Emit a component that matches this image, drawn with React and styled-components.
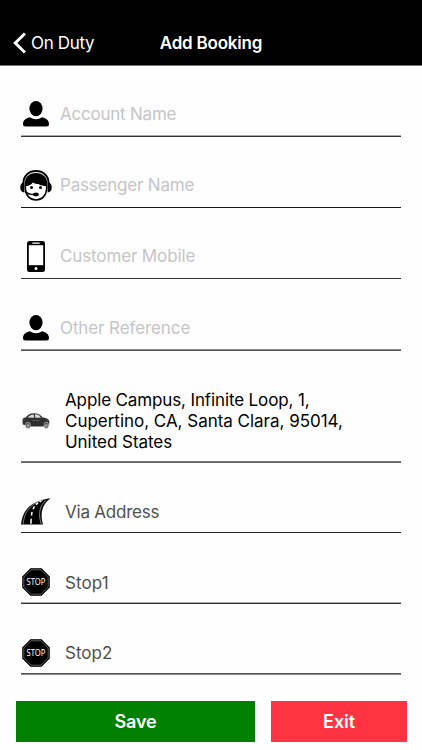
import React from 'react';
import styled, { createGlobalStyle } from 'styled-components';

const GlobalStyle = createGlobalStyle`
  * { box-sizing: border-box; }
  html, body { margin: 0; background: #fff; }
  body { font-family: Inter, "Liberation Sans", sans-serif; }
`;

const Screen = styled.div`
  width: 422px;
  height: 750px;
  display: flex;
  flex-direction: column;
  background: #fefefe;
  overflow: hidden;
`;

const NavBar = styled.header`
  height: 66px;
  flex: none;
  padding: 20px 13px 0;
  display: grid;
  grid-template-columns: 1fr auto 1fr;
  align-items: center;
  background: #000;
  border-bottom: 1px solid #777;
  color: #fff;
`;

const BackButton = styled.button`
  display: flex;
  align-items: center;
  gap: 5px;
  padding: 0;
  border: 0;
  background: none;
  color: inherit;
  font: 400 17px/22px Inter, sans-serif;
  letter-spacing: -0.35px;
`;

const Title = styled.h1`
  margin: 0;
  font-size: 17px;
  line-height: 22px;
  font-weight: 600;
  letter-spacing: -0.2px;
`;

const Form = styled.main`
  padding: 0 21px;
  display: flex;
  flex-direction: column;
`;

const Row = styled.div`
  height: ${(p) => p.$height}px;
  display: flex;
  align-items: flex-end;
  border-bottom: 1px solid ${(p) => p.$lower};
  box-shadow: inset 0 -1px 0 ${(p) => p.$upper};
`;

const IconSlot = styled.span`
  width: 30px;
  height: 32px;
  flex: none;
  margin-bottom: ${(p) => p.$lift}px;
  display: flex;
  align-items: center;
  justify-content: center;
  svg { display: block; flex: none; overflow: visible; }
`;

const Label = styled.div`
  margin: 0 0 ${(p) => p.$lift}px ${(p) => p.$gap}px;
  font-size: 17px;
  line-height: 21px;
  letter-spacing: ${(p) => p.$spacing}px;
  color: ${(p) => p.$color};
  white-space: nowrap;
`;

const Line = styled.span`
  display: block;
  letter-spacing: ${(p) => p.$spacing}px;
`;

const Actions = styled.footer`
  display: grid;
  grid-template-columns: 239px 136px;
  gap: 16px;
  padding: 26px 0 0 16px;
`;

const Action = styled.button`
  height: 41px;
  border: 0;
  padding: 0;
  color: #fff;
  background: ${(p) => p.$bg};
  font: 600 18px/22px Inter, sans-serif;
  letter-spacing: -0.1px;
`;

const PersonIcon = () => (
  <svg width="26" height="26" viewBox="0 0 26 26">
    <ellipse cx="13" cy="7.600" rx="6.600" ry="7.600" />
    <path d="M6.800 16.200Q13 20.200 19.200 16.200C23.500 17.200 26 19.500 26 23Q26 25.500 23.400 25.500H2.600Q0 25.500 0 23C0 19.500 2.500 17.200 6.800 16.200Z" />
  </svg>
);

const AgentIcon = () => (
  <svg width="32" height="31" viewBox="0 0 32 31">
    <path d="M3.400 13C3.600 5.500 8.800 1 16 1s12.400 4.500 12.600 12" fill="none" stroke="#000" strokeWidth="1.900" />
    <path d="M4.600 14C4.600 7.400 9.300 3 16 3S27.400 7.400 27.400 14L27 20H5Z" />
    <path d="M4.400 12.600V22.400Q.3 22 .3 17.400T4.400 12.600ZM27.600 12.600V22.400Q31.700 22 31.700 17.400T27.600 12.600Z" />
    <path d="M5.400 15.600Q11.200 14.700 12.800 11.200Q14 13.300 16.800 13.300Q16.100 12.600 16.600 11.600Q19.500 15 26.600 15.600V18.800C26.400 25.500 22 29.900 16 29.900S5.600 25.500 5.400 18.800Z" fill="#fff" stroke="#000" strokeWidth="1.500" />
    <circle cx="11.500" cy="17.500" r="1.500" />
    <circle cx="20.500" cy="17.500" r="1.500" />
    <path d="M5 21.200Q8 24.500 14 24.500" fill="none" stroke="#000" strokeWidth="1.400" />
    <ellipse cx="16" cy="24.400" rx="2.900" ry="1.800" />
  </svg>
);

const PhoneIcon = () => (
  <svg width="18" height="31" viewBox="0 0 18 31">
    <rect width="18" height="31" rx="2.500" />
    <rect x="1.800" y="4.200" width="14.400" height="20" fill="#fff" />
    <path d="M5.700 2.100h6.600" stroke="#fff" strokeWidth="1.100" strokeLinecap="round" />
    <circle cx="9" cy="27.400" r="1.500" fill="#fff" />
  </svg>
);

const CarIcon = () => (
  <svg width="28" height="16" viewBox="0 0 28 16">
    <path d="M.5 8Q0 4.800 3.500 4.400Q6.500 1 9 .6Q13.500-.2 17 1.200Q19.300 2.600 20.700 4.500Q25.500 5 26.800 7Q28 9.300 27.200 11.800L21 13.500H8L.8 11.500Z" fill="#303030" />
    <path d="M5.500 4.600Q7.600 2 9.500 1.700L11.700 1.400 12.200 4.800ZM12.800 1.300Q15.500 1.300 17 2.200L19 4.700 13.300 4.800Z" fill="#d9d9d9" />
    <path d="M.8 7h2M24.300 7.400l2 1M10 7.500h8" stroke="#777" strokeWidth=".5" />
    <g fill="#555" stroke="#ddd" strokeWidth=".5">
      <ellipse cx="6" cy="12.200" rx="2.500" ry="3.100" />
      <ellipse cx="24.300" cy="12.200" rx="2.300" ry="3.100" />
    </g>
    <circle cx="6" cy="12.500" r="1.300" fill="#aaa" />
    <circle cx="24.300" cy="12.500" r="1.300" fill="#aaa" />
  </svg>
);

const RoadIcon = () => (
  <svg width="30" height="27" viewBox="0 0 30 27">
    <path d="M0 26.500C1.500 13 8 3.500 29.500.2Q17 9.500 22 26.500Z" />
    <path d="M2 26C3.500 15 8 6 22 2.400M20.200 26C16.500 14.500 19.500 6.500 25 2.500" fill="none" stroke="#fff" strokeWidth=".5" />
    <path d="M10.200 20.700L9.900 25.700M11 13.800L10.500 17.500M13.400 8.400L12.100 11.300M17 4.900L15 6.600M20.400 2.900L18.700 3.800" stroke="#fff" strokeWidth="1.500" />
  </svg>
);

const StopIcon = () => (
  <svg width="28" height="28" viewBox="0 0 28 28">
    <path d="M8.500.5h11L27.500 8.500v11L19.500 27.500h-11L.5 19.500v-11Z" fill="#000" stroke="#333" />
    <path d="M9 1.800h10L26.200 9v10L19 26.200H9L1.800 19V9Z" fill="none" stroke="#999" strokeWidth=".6" />
    <text x="14" y="16.900" textAnchor="middle" textLength="19" lengthAdjust="spacingAndGlyphs" fill="#fff" fontFamily="Noto Sans, sans-serif" fontSize="8">STOP</text>
  </svg>
);

const HINT = '#c5c5c7';
const FIELD = '#505050';

const fields = [
  { text: 'Account Name', Icon: PersonIcon, height: 71, iconLift: 6, lift: 11, gap: 9, color: HINT, spacing: -0.22, upper: '#aaa', lower: '#333' },
  { text: 'Passenger Name', Icon: AgentIcon, height: 71, iconLift: 6, lift: 11, gap: 9, color: HINT, spacing: -0.2, upper: 'transparent', lower: '#151515' },
  { text: 'Customer Mobile', Icon: PhoneIcon, height: 71, iconLift: 6, lift: 11, gap: 9, color: HINT, spacing: -0.13, upper: 'transparent', lower: '#303030' },
  { text: 'Other Reference', Icon: PersonIcon, height: 72, iconLift: 6, lift: 11, gap: 9, color: HINT, spacing: -0.1, upper: '#858585', lower: '#585858' },
  {
    lines: [['Apple Campus, Infinite Loop, 1,', -0.13], ['Cupertino, CA, Santa Clara, 95014,', -0.02], ['United States', -0.04]],
    Icon: CarIcon, height: 112, iconLift: 25, lift: 9, gap: 14, color: '#000', spacing: 0, upper: '#777', lower: '#666',
  },
  { text: 'Via Address', Icon: RoadIcon, height: 70, iconLift: 5, lift: 9, gap: 14, color: FIELD, spacing: -0.22, upper: 'transparent', lower: '#222' },
  { text: 'Stop1', Icon: StopIcon, height: 71, iconLift: 5, lift: 9, gap: 14, color: FIELD, spacing: 0.1, upper: '#aaa', lower: '#333' },
  { text: 'Stop2', Icon: StopIcon, height: 71, iconLift: 5, lift: 10, gap: 14, color: FIELD, spacing: 0, upper: '#555', lower: '#858585' },
];

export default function App() {
  return (
    <>
      <GlobalStyle />
      <Screen>
        <NavBar>
          <BackButton>
            <svg width="13" height="22" viewBox="0 0 13 22" fill="none" stroke="#fff" strokeWidth="3">
              <path d="M12 1.500L2.300 11l9.700 9.500" />
            </svg>
            On Duty
          </BackButton>
          <Title>Add Booking</Title>
        </NavBar>
        <Form>
          {fields.map(({ text, lines, Icon, height, iconLift, lift, gap, color, spacing, upper, lower }) => (
            <Row key={text || 'pickup'} $height={height} $upper={upper} $lower={lower}>
              <IconSlot $lift={iconLift}><Icon /></IconSlot>
              <Label $lift={lift} $gap={gap} $color={color} $spacing={spacing}>
                {lines ? lines.map(([line, s]) => <Line key={line} $spacing={s}>{line}</Line>) : text}
              </Label>
            </Row>
          ))}
        </Form>
        <Actions>
          <Action $bg="#008000">Save</Action>
          <Action $bg="#ff3341">Exit</Action>
        </Actions>
      </Screen>
    </>
  );
}
